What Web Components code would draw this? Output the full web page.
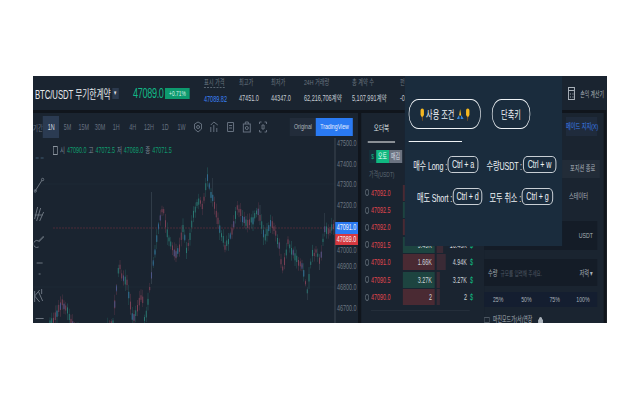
<!DOCTYPE html>
<html lang="ko">
<head>
<meta charset="utf-8">
<title>BTC/USDT</title>
<style>
  html, body { margin: 0; background: #fff; }
  body { font-family: "Liberation Sans", "Noto Sans CJK KR", sans-serif; --u: 1.5385px; }
</style>
</head>
<body>
<trade-app></trade-app>
<script>
const FONT = `"Liberation Sans", "Noto Sans CJK KR", sans-serif`;

class TradeHeader extends HTMLElement {
  constructor() {
    super();
    const stats = [
      ['표시 가격', '47089.82', 35, 'mark'],
      ['최고가', '47451.0', 32, ''],
      ['최저가', '44347.0', 33, ''],
      ['24H 거래량', '62,216,706계약', 48, ''],
      ['총 계약 수', '5,107,991계약', 48, ''],
      ['펀딩', '-0.01', 30, ''],
    ];
    this.attachShadow({mode: 'open'}).innerHTML = `
      <style>
        :host { display: flex; align-items: center; height: 34px; background: #1a2430; color: #e6e9ec; overflow: hidden; }
        .title { margin-left: calc(2 * var(--u)); font-size: 12px; white-space: nowrap; width: calc(77 * var(--u)); letter-spacing: -.15px; }
        .drop { width: calc(7 * var(--u)); height: 11px; background: #2c3a4e; display: flex; align-items: center; justify-content: center; font-size: 7px; }
        .price { margin-left: calc(14 * var(--u)); width: calc(32 * var(--u)); font-size: 14px; letter-spacing: -.5px; color: #12b886; }
        .badge { width: calc(25 * var(--u)); height: 11px; line-height: 11px; background: #0d9a6e; color: #d9f5ea; font-size: 7.500px; text-align: center; }
        .stat { display: flex; flex-direction: column; gap: 7px; font-size: 8.500px; white-space: nowrap; }
        .stats { margin-left: calc(14 * var(--u)); display: flex; padding-bottom: 6px; }
        .stat b { font-weight: normal; font-size: 8px; color: #69747f; line-height: 9px; }
        .stat i { font-style: normal; color: #c5ccd3; line-height: 8px; }
        .mark b { border-bottom: 1px dashed #69747f; align-self: flex-start; }
        .mark i { color: #3b82f6; }
        .calc { margin-left: auto; margin-right: calc(3 * var(--u)); display: flex; align-items: center; gap: calc(5 * var(--u)); font-size: 7.500px; color: #aab2ba; white-space: nowrap; }
        svg { width: calc(7 * var(--u)); height: 13px; display: block; }
      </style>
      <span class="title">BTC/USDT 무기한계약</span>
      <span class="drop">▾</span>
      <span class="price">47089.0</span>
      <span class="badge">+0.71%</span>
      <div class="stats">
        ${stats.map(s => `<div class="stat ${s[3]}" style="width:calc(${s[2]} * var(--u))"><b>${s[0]}</b><i>${s[1]}</i></div>`).join('')}
      </div>
      <div class="calc">
        <svg viewBox="0 0 7 13" preserveAspectRatio="none" fill="none" stroke="#aab2ba"><rect x=".5" y=".5" width="6" height="12"/><path d="M1 3.500h5M2 7h1M4.500 7h1M2 10h1M4.500 10h1"/></svg>
        <span>손익 계산기</span>
      </div>
    `;
  }
}

class ChartPane extends HTMLElement {
  constructor() {
    super();
    const times = ['5M', '15M', '30M', '1H', '4H', '12H', '1D', '1W'];
    const axis = [[143, '47500.0'], [164, '47400.0'], [184, '47300.0'], [205, '47200.0'], [250, '47000.0'], [266, '46900.0'], [287, '46800.0'], [308, '46700.0']];
    this.attachShadow({mode: 'open'}).innerHTML = `
      <style>
        :host { display: flex; flex-direction: column; background: #1a2430; height: 210px; overflow: hidden; }
        .bar { display: flex; align-items: center; height: 25px; padding-top: 3px; box-sizing: border-box; flex: none; font-size: 8.300px; color: #667180; }
        .bar span { width: calc(16.3 * var(--u)); text-align: center; white-space: nowrap; }
        .bar .first { width: calc(10 * var(--u)); overflow: hidden; direction: rtl; text-align: left; }
        .bar .on { height: 22px; line-height: 22px; background: #2b3b52; color: #d5dbe2; }
        .ico { width: calc(16.3 * var(--u)); height: 13px; display: flex; justify-content: center; }
        .ico svg { width: calc(9 * var(--u)); height: 12px; }
        .group { margin-left: auto; margin-right: calc(5 * var(--u)); display: flex; height: 18px; margin-top: -1px; line-height: 18px; font-size: 8px; }
        .group div:first-child { width: calc(26 * var(--u)); background: #222c3a; color: #aeb6bf; text-align: center; }
        .group div:last-child { width: calc(37 * var(--u)); background: #2a7af3; color: #e8f1ff; text-align: center; white-space: nowrap; }
        .canvas { position: relative; flex: 1; }
        .plot { position: absolute; inset: 0; width: 100%; height: 100%; }
        .ohlc { position: relative; margin-left: calc(20 * var(--u)); height: 10px; margin-top: 7px; display: flex; gap: calc(2 * var(--u)); align-items: center; font-size: 8.300px; line-height: 10px; color: #0f9d6f; white-space: nowrap; }
        .ohlc b { font-weight: normal; color: #7c8792; }
        .ohlc .box { width: calc(5 * var(--u)); height: 9px; border: 1px solid #8b949e; box-sizing: border-box; }
        .tools { position: absolute; left: 0; top: 19px; width: calc(12 * var(--u)); display: flex; flex-direction: column; align-items: center; }
        .tools svg { width: calc(11 * var(--u)); display: block; flex: none; }
        .axis { position: absolute; left: calc(302 * var(--u)); width: calc(23 * var(--u)); font-size: 8.300px; line-height: 10px; color: #6c7682; padding-left: calc(2 * var(--u)); box-sizing: border-box; white-space: nowrap; }
        .tag { position: absolute; left: calc(302 * var(--u)); width: calc(23 * var(--u)); height: 11.500px; line-height: 11.500px; text-align: center; font-size: 8.300px; color: #f2f5f8; }
      </style>
      <div class="bar">
        <span class="first">기간</span><span class="on">1N</span>
        ${times.map(t => `<span>${t}</span>`).join('')}
        <div class="ico"><svg viewBox="0 0 9 12" preserveAspectRatio="none" fill="none" stroke="#667180"><path d="M4.500 1l3.500 2v5l-3.500 3-3.500-3v-5z"/><circle cx="4.500" cy="6" r="1.500"/></svg></div>
        <div class="ico"><svg viewBox="0 0 9 12" preserveAspectRatio="none" fill="none" stroke="#667180"><path d="M1 11V6M4 11V4M7 11V7M1 4l3-3 4 3"/></svg></div>
        <div class="ico"><svg viewBox="0 0 9 12" preserveAspectRatio="none" fill="none" stroke="#667180"><path d="M1.500 1.500h6v9h-6zM3 4.500h3M3 7h3"/></svg></div>
        <div class="ico"><svg viewBox="0 0 9 12" preserveAspectRatio="none" fill="none" stroke="#667180"><rect x="1" y="3" width="7" height="8"/><path d="M3 3V1h3v2"/><circle cx="4.500" cy="7" r="1.500"/></svg></div>
        <div class="ico"><svg viewBox="0 0 9 12" preserveAspectRatio="none" fill="none" stroke="#667180"><path d="M1 1h2M6 1h2M8 1v2M8 9v2M8 11H6M3 11H1M1 11V9M1 3V1M3.500 4h2v4h-2z"/></svg></div>
        <div class="group"><div>Original</div><div>TradingView</div></div>
      </div>
      <div class="canvas">
        <svg class="plot" viewBox="33 138 325 185" preserveAspectRatio="none">${this.plot()}</svg>
        <div class="ohlc"><span class="box"></span><b>시</b><span>47090.0</span><b>고</b><span>47072.5</span><b>저</b><span>47069.0</span><b>종</b><span>47071.5</span></div>
        <div class="tools">
          <svg viewBox="0 0 11 2" preserveAspectRatio="none" stroke="#3f5a70" style="height:2px"><path d="M2 1h3M7 1h3"/></svg>
          <svg viewBox="0 0 11 16" preserveAspectRatio="none" fill="none" stroke="#6b7480" style="height:16px;margin-top:18px"><path d="M1.500 14L8.500 3"/><circle cx="9" cy="2.500" r="1.200"/><circle cx="1.500" cy="14" r="1.200"/></svg>
          <svg viewBox="0 0 11 17" preserveAspectRatio="none" fill="none" stroke="#6b7480" style="height:17px;margin-top:12px"><path d="M1 14L4 2M3 16L7 3M6 16L10 7M1 10h8"/></svg>
          <svg viewBox="0 0 11 13" preserveAspectRatio="none" fill="none" stroke="#6b7480" style="height:13px;margin-top:13px"><path d="M5 12a3.500 3.500 0 1 1 0-6L10 1M5 7l5-5"/></svg>
          <svg viewBox="0 0 11 13" preserveAspectRatio="none" fill="none" stroke="#6b7480" style="height:13px;margin-top:14px"><path d="M3 1h6M5 12h2"/></svg>
          <svg viewBox="0 0 11 15" preserveAspectRatio="none" fill="none" stroke="#6b7480" style="height:15px;margin-top:13px"><path d="M1 3v11M1 8l5-6M1 8l5 6M5 4l4 9M8 1v5"/></svg>
          <svg viewBox="0 0 11 3" preserveAspectRatio="none" fill="none" stroke="#6b7480" style="height:3px;margin-top:14px"><path d="M2 1.500h8"/></svg>
        </div>
        ${axis.map(a => `<div class="axis" style="top:${a[0] - 143}px">${a[1]}</div>`).join('')}
        <div class="tag" style="top:84px;background:#2a7af3">47091.0</div>
        <div class="tag" style="top:95.500px;background:#d6383f">47089.0</div>
      </div>
    `;
  }

  // candle positions follow a hand-read trace of the price line
  plot() {
    const trace = [[46,330],[52,322],[58,310],[63,303],[68,312],[73,326],[90,345],[108,330],[113,322],[119,265],[123,278],[127,283],[133,322],[138,305],[142,293],[145,322],[148,300],[152,273],[158,230],[163,207],[167,233],[175,257],[179,250],[183,227],[187,253],[193,217],[198,200],[203,207],[207,177],[210,190],[213,200],[222,237],[225,247],[232,233],[237,205],[245,223],[251,222],[258,212],[265,237],[272,222],[280,250],[282,273],[288,243],[297,260],[303,267],[307,293],[312,253],[317,253],[320,263],[325,227],[329,232],[333,223]];
    const spikes = {119: 250, 152: 192, 198: 167, 207: 153, 213: 178, 247: 203, 260: 205, 325: 213};
    const dips = {175: 265, 247: 252, 282: 285, 307: 300, 320: 270};
    let seed = 7;
    const rnd = () => (seed = (seed * 16807) % 2147483647) / 2147483647;
    const at = x => {
      for (let i = 1; i < trace.length; i++) {
        if (x <= trace[i][0]) {
          const [x0, y0] = trace[i - 1], [x1, y1] = trace[i];
          return y0 + (y1 - y0) * (x - x0) / (x1 - x0);
        }
      }
      return 225;
    };
    let out = '<path d="M33 184H335M33 287H335" stroke="#222c3a" stroke-width=".5"/>';
    out += '<path d="M53 228H335" stroke="#5a2f3a" stroke-width=".8" stroke-dasharray="2 1"/>';
    for (let x = 50; x < 334; x += 1.75) {
      const y = at(x) + (rnd() - .5) * 4;
      const up = rnd() > .5;
      const col = up ? '#2f8f85' : '#96495f';
      const len = 3 + rnd() * 5;
      const key = Math.round(x);
      const top = spikes[key] !== undefined ? spikes[key] : y - len - rnd() * 4;
      const bot = dips[key] !== undefined ? dips[key] : y + len + rnd() * 4;
      out += `<path d="M${x} ${top}V${bot}" stroke="${spikes[key] || dips[key] ? '#647680' : col}" stroke-width=".5" opacity=".6"/>`;
      out += `<rect x="${x - .5}" y="${y - len / 2}" width="1" height="${len}" fill="${col}" opacity=".7"/>`;
      if (rnd() > .75) out += `<rect x="${x - .5}" y="${y - 3}" width="1" height="6" fill="#35609f" opacity=".65"/>`;
    }
    out += '<path d="M335 138V323" stroke="#47515c" stroke-width=".8"/>';
    return out;
  }
}

class OrderBook extends HTMLElement {
  constructor() {
    super();
    const rows = [
      ['47092.0', 'r', 0, '', ''],
      ['47092.5', 'g', 0, '', ''],
      ['47092.0', 'r', 0, '', ''],
      ['47091.5', 'g', 6, '9.49K', '16.43K'],
      ['47091.0', 'r', 9, '1.66K', '4.94K'],
      ['47090.5', 'g', 3, '3.27K', '3.27K'],
      ['47090.0', 'r', 3, '2', '2'],
    ];
    this.attachShadow({mode: 'open'}).innerHTML = `
      <style>
        :host { display: block; background: #1a2430; height: 210px; overflow: hidden; }
        .tab { margin-left: calc(7 * var(--u)); width: calc(27 * var(--u)); height: 28px; line-height: 30px; text-align: center; font-size: 8.500px; color: #dfe3e7; border-bottom: 2px solid #8a9096; }
        .switch { display: flex; margin: 7px 0 0 calc(8 * var(--u)); height: 13px; font-size: 7.500px; line-height: 13px; text-align: center; }
        .switch em { width: calc(7 * var(--u)); font-style: normal; color: #10b981; background: #16303a; }
        .switch b { width: calc(13 * var(--u)); font-weight: normal; background: #10b981; color: #e6fff6; }
        .switch i { width: calc(13 * var(--u)); font-style: normal; background: #6b7380; color: #d8dce0; }
        .head { margin: 7px 0 0 calc(8 * var(--u)); height: 10px; line-height: 10px; font-size: 7.500px; color: #5d6873; white-space: nowrap; }
        .rows { margin-top: 4px; }
        .row { display: flex; align-items: center; height: 17.400px; font-size: 8.300px; }
        .coin { margin-left: calc(4 * var(--u)); width: calc(4 * var(--u)); height: 7px; border: 1px solid #5d6873; border-radius: 50%; box-sizing: border-box; }
        .px { margin-left: calc(2 * var(--u)); width: calc(32 * var(--u)); color: #e0464f; }
        .vol { width: calc(32 * var(--u)); height: 16px; line-height: 16px; text-align: right; padding-right: calc(3 * var(--u)); box-sizing: border-box; color: #cfd5db; }
        .g .vol { background: #1d4440; }
        .r .vol { background: #4a2a33; }
        .depth { margin-left: calc(2 * var(--u)); width: calc(30 * var(--u)); height: 16px; position: relative; text-align: right; line-height: 16px; color: #cfd5db; }
        .depth span { position: absolute; left: 0; top: 0; bottom: 0; background: #3a2a35; }
        .depth em { position: relative; font-style: normal; }
        .mark { margin-left: calc(3 * var(--u)); color: #10b981; font-size: 8.500px; }
        .rule { margin: 4px calc(14 * var(--u)) 0 calc(10 * var(--u)); height: 1px; background: #242e3a; }
      </style>
      <div class="tab">오더북</div>
      <div class="switch"><em>$</em><b>오토</b><i>매김</i></div>
      <div class="head">가격(USDT)</div>
      <div class="rows">
        ${rows.map(r => `<div class="row ${r[1]}">
          <span class="coin"></span><span class="px">${r[0]}</span>
          <span class="vol">${r[3]}</span>
          <span class="depth"><span style="width:calc(${r[2]} * var(--u))"></span><em>${r[4]}</em></span>
          ${r[4] ? '<span class="mark">$</span>' : ''}
        </div>`).join('')}
      </div>
      <div class="rule"></div>
    `;
  }
}

class OrderForm extends HTMLElement {
  constructor() {
    super();
    this.attachShadow({mode: 'open'}).innerHTML = `
      <style>
        :host { display: block; background: #1a2430; height: 210px; overflow: hidden; font-size: 8px; color: #aab2ba; }
        .help { margin: 4px 0 0 calc(82 * var(--u)); width: calc(31 * var(--u)); height: 19px; line-height: 19px; text-align: center; background: #1f2b3c; color: #3a7ff0; white-space: nowrap; }
        .stop { margin: 24px 0 0 calc(76 * var(--u)); width: calc(40 * var(--u)); height: 18px; line-height: 18px; background: #222c38; padding-left: calc(10 * var(--u)); box-sizing: border-box; white-space: nowrap; }
        .state { margin: 14px 0 0 calc(85 * var(--u)); line-height: 10px; white-space: nowrap; }
        .box { width: calc(113 * var(--u)); background: #141c27; display: flex; align-items: center; box-sizing: border-box; padding: 0 calc(4 * var(--u)); }
        .usdt { height: 29px; margin-top: 19px; justify-content: flex-end; }
        .qty { height: 27px; margin-top: 9px; gap: calc(3 * var(--u)); white-space: nowrap; }
        .qty span:nth-child(2) { color: #4d5762; flex: 1; font-size: 7px; }
        .pct { height: 15px; margin-top: 6px; background: #141e30; padding: 0; }
        .pct span { flex: 1; text-align: center; }
        .check { margin-top: 10px; height: 6px; line-height: 6px; font-size: 7.500px; display: flex; align-items: center; gap: calc(3 * var(--u)); white-space: nowrap; }
        .check i { width: calc(6 * var(--u)); height: 6px; border: 1px solid #4d5762; box-sizing: border-box; }
        .check svg { width: calc(5 * var(--u)); height: 6px; margin-left: calc(3 * var(--u)); }
      </style>
      <div class="help">메이드 지지(X)</div>
      <div class="stop">포지션 종료</div>
      <div class="state">스테이터</div>
      <div class="box usdt">USDT</div>
      <div class="box qty"><span>수량</span><span>규모를 입력해 주세요.</span><span>저력 ▾</span></div>
      <div class="box pct"><span>25%</span><span>50%</span><span>75%</span><span>100%</span></div>
      <div class="check"><i></i><span>마진모드가(서)연장</span>
        <svg viewBox="0 0 5 6" preserveAspectRatio="none"><path d="M1 2.500V1.500a1.500 1.500 0 0 1 3 0V2.500H5V6H0V2.500z" fill="#aab2ba"/></svg>
      </div>
    `;
  }
}

class ShortcutKey extends HTMLElement {
  constructor() {
    super();
    this.attachShadow({mode: 'open'}).innerHTML = `
      <style>
        :host { display: inline-block; box-sizing: border-box; height: 17px; line-height: 15px; border: 1px solid #eef2f5; border-radius: 6px; text-align: center; font-size: 11px; letter-spacing: -.2px; color: #eef2f5; white-space: nowrap; }
      </style>
      <slot></slot>
    `;
  }
}

class ShortcutPopup extends HTMLElement {
  constructor() {
    super();
    const finger = `<svg class="e" viewBox="0 0 5 13" preserveAspectRatio="none"><path d="M.8 2.500a1.700 2 0 0 1 3.400 0V7L3 9H2L.8 7z" fill="#f5b820"/><path d="M2 8.500h1L2.700 13H2.300z" fill="#a8651c"/></svg>`;
    const pray = `<svg class="p" viewBox="0 0 8 12" preserveAspectRatio="none"><path d="M4 1l1 6-1 1-1-1z" fill="#f5b820"/><path d="M3 7L.5 11H3.500zM5 7l2.500 4H4.500z" fill="#3a86d8"/></svg>`;
    this.attachShadow({mode: 'open'}).innerHTML = `
      <style>
        :host { position: absolute; left: calc(372 * var(--u)); top: 0; width: calc(157 * var(--u)); height: 170px; background: #1a2c3d; color: #eef2f5; font-size: 11px; }
        .btns { display: flex; margin: 23px 0 0 calc(4 * var(--u)); gap: calc(11 * var(--u)); }
        .pill { box-sizing: border-box; height: 30px; border: 1px solid #eef2f5; border-radius: 15px / 14px; display: flex; align-items: center; justify-content: center; white-space: nowrap; font-size: 11px; }
        .a { width: calc(72 * var(--u)); gap: calc(1.500 * var(--u)); }
        .b { width: calc(38 * var(--u)); }
        .e { width: calc(5 * var(--u)); height: 13px; }
        .p { width: calc(8 * var(--u)); height: 12px; }
        .line { margin: 12px 0 0 calc(4 * var(--u)); width: calc(53 * var(--u)); height: 1px; background: #eef2f5; }
        .keys { display: flex; margin-top: 14px; white-space: nowrap; align-items: center; }
        .label { text-align: right; font-size: 11px; letter-spacing: -.2px; }
        shortcut-key { margin-left: calc(1 * var(--u)); }
      </style>
      <div class="btns">
        <div class="pill a">${finger}<span>사용 조건</span>${pray}${finger}</div>
        <div class="pill b">단축키</div>
      </div>
      <div class="line"></div>
      <div class="keys">
        <span class="label" style="width:calc(42 * var(--u))">매수 Long :</span><shortcut-key style="width:calc(30 * var(--u))">Ctrl + a</shortcut-key>
        <span class="label" style="width:calc(44 * var(--u))">수량USDT :</span><shortcut-key style="width:calc(33 * var(--u))">Ctrl + w</shortcut-key>
      </div>
      <div class="keys" style="margin-top:15px">
        <span class="label" style="width:calc(47 * var(--u))">매도 Short :</span><shortcut-key style="width:calc(29 * var(--u))">Ctrl + d</shortcut-key>
        <span class="label" style="width:calc(39 * var(--u))">모두 취소 :</span><shortcut-key style="width:calc(31 * var(--u))">Ctrl + g</shortcut-key>
      </div>
    `;
  }
}

class TradeApp extends HTMLElement {
  constructor() {
    super();
    this.attachShadow({mode: 'open'}).innerHTML = `
      <style>
        :host { display: block; margin: 76px 0 0 33px; width: 574px; height: 247px; overflow: hidden; font-family: ${FONT}; }
        .frame { position: relative; width: calc(574 * var(--u)); height: 247px; background: #10151c; transform: scaleX(.65); transform-origin: 0 0; }
        .main { display: grid; grid-template-columns: calc(325 * var(--u)) calc(126 * var(--u)) calc(120 * var(--u)); margin-top: 3px; }
        order-book { margin-left: calc(3 * var(--u)); }
      </style>
      <div class="frame">
        <trade-header></trade-header>
        <div class="main">
          <chart-pane></chart-pane>
          <order-book></order-book>
          <order-form></order-form>
        </div>
        <shortcut-popup></shortcut-popup>
      </div>
    `;
  }
}

customElements.define('trade-header', TradeHeader);
customElements.define('chart-pane', ChartPane);
customElements.define('order-book', OrderBook);
customElements.define('order-form', OrderForm);
customElements.define('shortcut-key', ShortcutKey);
customElements.define('shortcut-popup', ShortcutPopup);
customElements.define('trade-app', TradeApp);
</script>
</body>
</html>
